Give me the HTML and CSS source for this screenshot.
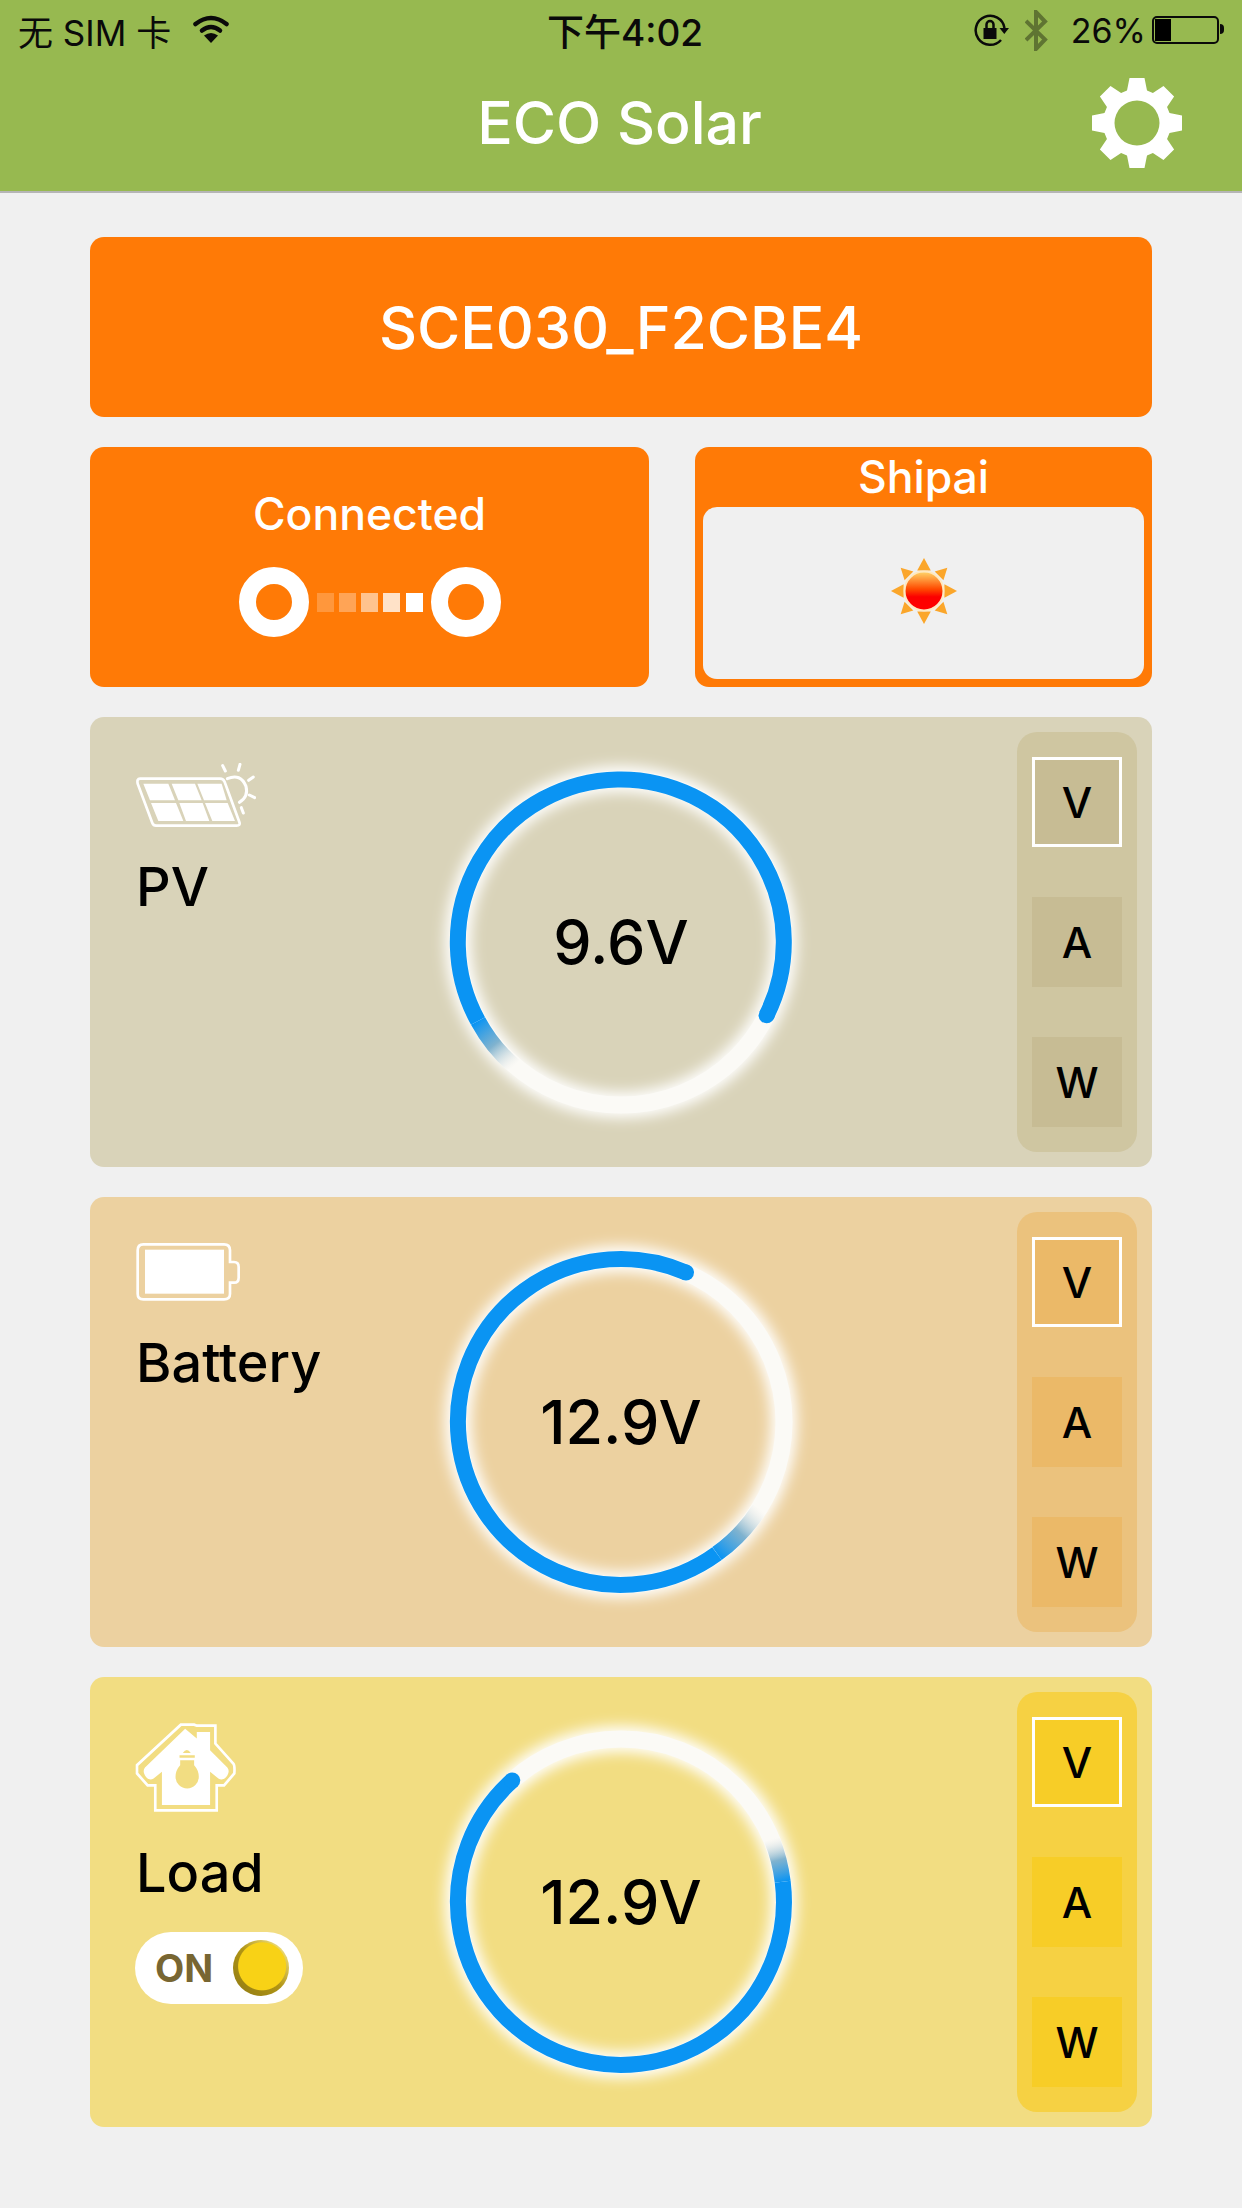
FILE: index.html
```html
<!DOCTYPE html>
<html>
<head>
  <meta charset="utf-8">
  <title>ECO Solar</title>
  <link rel="stylesheet" href="styles.css">
</head>
<body>
  <svg class="defs" width="0" height="0">
    <defs>
      <filter id="glow" x="-20%" y="-20%" width="140%" height="140%">
        <feGaussianBlur stdDeviation="7"></feGaussianBlur>
      </filter>
      <linearGradient id="fadePv" gradientUnits="userSpaceOnUse" x1="30" y1="252" x2="66" y2="297">
        <stop offset="0" stop-color="#0a94f3"></stop>
        <stop offset="0.5" stop-color="#6aa6c8" stop-opacity="0.85"></stop>
        <stop offset="1" stop-color="#d8dcd8" stop-opacity="0"></stop>
      </linearGradient>
      <linearGradient id="fadeBattery" gradientUnits="userSpaceOnUse" x1="269" y1="304.6" x2="311.5" y2="259.7">
        <stop offset="0" stop-color="#0a94f3"></stop>
        <stop offset="0.5" stop-color="#6aa6c8" stop-opacity="0.85"></stop>
        <stop offset="1" stop-color="#d8dcd8" stop-opacity="0"></stop>
      </linearGradient>
      <linearGradient id="fadeLoad" gradientUnits="userSpaceOnUse" x1="334.7" y1="152.8" x2="323.6" y2="110">
        <stop offset="0" stop-color="#0a94f3"></stop>
        <stop offset="0.5" stop-color="#6aa6c8" stop-opacity="0.85"></stop>
        <stop offset="1" stop-color="#d8dcd8" stop-opacity="0"></stop>
      </linearGradient>
      <linearGradient id="sunFill" x1="0" y1="0" x2="0" y2="1">
        <stop offset="0" stop-color="#ffd76a"></stop>
        <stop offset="0.45" stop-color="#ff4a00"></stop>
        <stop offset="0.65" stop-color="#fc0000"></stop>
        <stop offset="1" stop-color="#ff0000"></stop>
      </linearGradient>
    </defs>
  </svg>

  <div class="top">
    <div class="status-bar">
      <div class="status-left">
        <span>无 SIM 卡</span>
        <svg class="wifi" viewBox="0 0 36 28">
          <path class="wifi-band" d="M2.500 9 Q18 -3 33.500 9"></path>
          <path class="wifi-band" d="M9 15.500 Q18 8.500 27 15.500"></path>
          <path class="wifi-tip" d="M11 20.500 Q18 15.500 25 20.500 L18 28 Z"></path>
        </svg>
      </div>
      <div class="status-time">下午4:02</div>
      <div class="status-right">
        <svg class="lock" viewBox="0 0 36 34">
          <path class="lock-ring" d="M28 27 A14.500 14.500 0 1 1 31.500 15"></path>
          <path class="lock-solid" d="M26.500 15 H36 L31.300 21 Z"></path>
          <rect class="lock-solid" x="10.500" y="15" width="13" height="11"></rect>
          <path class="lock-ring" d="M13.500 15 V11.500 A3.500 3.500 0 0 1 20.500 11.500 V15"></path>
        </svg>
        <svg class="bluetooth" viewBox="0 0 23 41">
          <path d="M1 11 L20 29.500 L11 39 V2 L20 11.500 L1 30"></path>
        </svg>
        <span class="phone-percent">26%</span>
        <div class="phone-battery"><div class="phone-battery-level"></div></div>
      </div>
    </div>
    <div class="nav">
      <div class="nav-title">ECO Solar</div>
      <svg class="gear" viewBox="0 0 90 90">
        <path fill-rule="evenodd" d="M37.500 0 H52.500 L55 12.500 L60.900 14.950 L71.500 7.900 L82.100 18.500 L75.050 29.100 L77.500 35 L90 37.500 V52.500 L77.500 55 L75.050 60.900 L82.100 71.500 L71.500 82.100 L60.900 75.050 L55 77.500 L52.500 90 H37.500 L35 77.500 L29.100 75.050 L18.500 82.100 L7.900 71.500 L14.950 60.900 L12.500 55 L0 52.500 V37.500 L12.500 35 L14.950 29.100 L7.900 18.500 L18.500 7.900 L29.100 14.950 L35 12.500 Z M45 22.500 A22.500 22.500 0 1 0 45 67.500 A22.500 22.500 0 1 0 45 22.500 Z"></path>
      </svg>
    </div>
  </div>

  <div class="content">
    <div class="device-name">SCE030_F2CBE4</div>

    <div class="info-row">
      <div class="connection">
        <div class="connection-label">Connected</div>
        <div class="link">
          <div class="link-end"></div>
          <div class="link-dots">
            <i class="dot-1"></i><i class="dot-2"></i><i class="dot-3"></i><i class="dot-4"></i><i class="dot-5"></i>
          </div>
          <div class="link-end"></div>
        </div>
      </div>
      <div class="weather">
        <div class="weather-city">Shipai</div>
        <div class="weather-box">
          <svg class="sun" viewBox="0 0 70 70">
            <g class="sun-rays">
              <path d="M35 1 L42 14 H28 Z"></path>
              <path d="M35 69 L42 56 H28 Z"></path>
              <path d="M1 35 L14 28 V42 Z"></path>
              <path d="M69 35 L56 28 V42 Z"></path>
              <path d="M11 11 L24 15 L15 24 Z"></path>
              <path d="M59 11 L46 15 L55 24 Z"></path>
              <path d="M11 59 L24 55 L15 46 Z"></path>
              <path d="M59 59 L46 55 L55 46 Z"></path>
            </g>
            <circle class="sun-core" cx="35" cy="35" r="20"></circle>
          </svg>
        </div>
      </div>
    </div>

    <div class="card card-pv">
      <div class="card-info">
        <svg class="icon icon-pv" viewBox="48 38 360 195">
          <path class="icon-line" d="M60 85 H300 Q310 85 314 95 L358 215 Q362 226 350 226 H108 Q100 226 97 218 L53 100 Q50 85 60 85 Z"></path>
          <path class="icon-fill" d="M70 100 H145 L165 150 H90 Z M155 100 H225 L245 150 H175 Z M232 100 H305 L320 150 H252 Z M93 158 H168 L190 212 H115 Z M178 158 H248 L268 212 H198 Z M255 158 H323 L345 212 H277 Z"></path>
          <path class="icon-ray" d="M322 85 Q362 68 378 108 Q386 140 358 156"></path>
          <path class="icon-ray" d="M308 46 L316 62 M360 42 L355 60 M400 80 L386 90 M404 142 L388 134 M364 172 L370 188"></path>
        </svg>
        <div class="card-label">PV</div>
      </div>
      <div class="gauge">
        <svg viewBox="0 0 346 346">
          <circle class="gauge-glow" cx="173" cy="173" r="163"></circle>
          <circle class="gauge-track" cx="173" cy="173" r="163"></circle>
          <path class="gauge-arc" d="M30 252 A163 163 0 1 1 318.600 246.300"></path>
          <circle class="gauge-cap" cx="318.600" cy="246.300" r="8"></circle>
          <path class="gauge-fade" stroke="url(#fadePv)" d="M66 297 A163 163 0 0 1 30 252"></path>
        </svg>
        <div class="gauge-value">9.6V</div>
      </div>
      <div class="units">
        <div class="unit unit-active">V</div>
        <div class="unit">A</div>
        <div class="unit">W</div>
      </div>
    </div>

    <div class="card card-battery">
      <div class="card-info">
        <svg class="icon icon-battery" viewBox="48 68 312 174">
          <path class="icon-line" d="M70 72 H312 Q330 72 330 90 V125 H342 Q356 125 356 140 V172 Q356 187 342 187 H330 V220 Q330 237 312 237 H70 Q53 237 53 220 V90 Q53 72 70 72 Z"></path>
          <rect class="icon-fill" x="75" y="88" width="237" height="132"></rect>
        </svg>
        <div class="card-label">Battery</div>
      </div>
      <div class="gauge">
        <svg viewBox="0 0 346 346">
          <circle class="gauge-glow" cx="173" cy="173" r="163"></circle>
          <circle class="gauge-track" cx="173" cy="173" r="163"></circle>
          <path class="gauge-arc" d="M269 304.600 A163 163 0 1 1 238 23.500"></path>
          <circle class="gauge-cap" cx="238" cy="23.500" r="8"></circle>
          <path class="gauge-fade" stroke="url(#fadeBattery)" d="M311.500 259.700 A163 163 0 0 1 269 304.600"></path>
        </svg>
        <div class="gauge-value">12.9V</div>
      </div>
      <div class="units">
        <div class="unit unit-active">V</div>
        <div class="unit">A</div>
        <div class="unit">W</div>
      </div>
    </div>

    <div class="card card-load">
      <div class="card-info">
        <svg class="icon icon-load" viewBox="45 38 302 268">
          <path class="icon-line" d="M182 43 H222 L230 46 H286 V100 L340 160 Q345 166 343 190 L312 226 H290 V301 H105 V226 H82 L50 190 V165 Z"></path>
          <path class="icon-fill" fill-rule="evenodd" d="M195 55 L230 85 V65 H270 V120 L322 172 Q330 182 322 196 Q310 214 295 205 L270 185 V285 H125 V185 L100 205 Q85 214 74 196 Q66 182 74 172 Z M188 128 Q200 110 212 128 Z M178 135 H224 V143 H178 Z M180 150 H222 V165 Q236 180 236 200 A35 35 0 0 1 166 200 Q166 180 180 165 Z"></path>
        </svg>
        <div class="card-label">Load</div>
        <div class="toggle">
          <span class="toggle-text">ON</span>
          <div class="toggle-knob"></div>
        </div>
      </div>
      <div class="gauge">
        <svg viewBox="0 0 346 346">
          <circle class="gauge-glow" cx="173" cy="173" r="163"></circle>
          <circle class="gauge-track" cx="173" cy="173" r="163"></circle>
          <path class="gauge-arc" d="M334.700 152.800 A163 163 0 1 1 64.200 51.500"></path>
          <circle class="gauge-cap" cx="64.200" cy="51.500" r="8"></circle>
          <path class="gauge-fade" stroke="url(#fadeLoad)" d="M323.600 110 A163 163 0 0 1 334.700 152.800"></path>
        </svg>
        <div class="gauge-value">12.9V</div>
      </div>
      <div class="units">
        <div class="unit unit-active">V</div>
        <div class="unit">A</div>
        <div class="unit">W</div>
      </div>
    </div>
  </div>
</body>
</html>
```

FILE: styles.css
```css
html, body {
  margin: 0;
  padding: 0;
}

body {
  width: 1242px;
  height: 2208px;
  background: #f0f0f0;
  font-family: Inter, "Noto Sans CJK SC", sans-serif;
  color: #000;
  overflow: hidden;
}

.defs {
  position: absolute;
}

.top {
  height: 191px;
  background: #97b950;
  border-bottom: 2px solid #b5b5b5;
}

.status-bar {
  height: 60px;
  padding: 0 18px;
  display: grid;
  grid-template-columns: 1fr auto 1fr;
  align-items: center;
  font-size: 35px;
  color: #0a0a0a;
}

.status-left {
  display: flex;
  align-items: center;
  gap: 22px;
}

.wifi {
  width: 36px;
  height: 28px;
  margin-top: -2px;
}

.wifi-band {
  fill: none;
  stroke: #0a0a0a;
  stroke-width: 4.500;
  stroke-linecap: round;
}

.wifi-tip {
  fill: #0a0a0a;
}

.status-time {
  font-weight: 500;
  font-size: 37px;
  margin-left: 8px;
}

.status-right {
  display: flex;
  align-items: center;
  justify-content: flex-end;
}

.lock {
  width: 36px;
  height: 34px;
}

.lock-ring {
  fill: none;
  stroke: #0a0a0a;
  stroke-width: 2.500;
}

.lock-solid {
  fill: #0a0a0a;
}

.bluetooth {
  width: 23px;
  height: 41px;
  margin-left: 16px;
  margin-right: 23px;
}

.bluetooth path {
  fill: none;
  stroke: #5f7432;
  stroke-width: 4;
}

.phone-percent {
  font-size: 34px;
  margin-right: 6px;
}

.phone-battery {
  width: 67px;
  height: 28px;
  margin-right: 5px;
  border: 2px solid #0a0a0a;
  border-radius: 5px;
  box-sizing: border-box;
  padding: 1px;
  position: relative;
}

.phone-battery::after {
  content: "";
  position: absolute;
  right: -7px;
  top: 6px;
  width: 4px;
  height: 10px;
  background: #0a0a0a;
  border-radius: 0 4px 4px 0;
}

.phone-battery-level {
  width: 16px;
  height: 100%;
  background: #000;
}

.nav {
  height: 131px;
  position: relative;
  display: flex;
  align-items: center;
  justify-content: center;
}

.nav-title {
  color: #fff;
  font-size: 59px;
  font-weight: 500;
  margin-left: -3px;
  margin-top: -6px;
}

.gear {
  position: absolute;
  right: 60px;
  top: 18px;
  width: 90px;
  height: 90px;
}

.gear path {
  fill: #fff;
}

.content {
  padding: 44px 90px 0;
  display: flex;
  flex-direction: column;
  gap: 30px;
}

.device-name {
  height: 180px;
  background: #ff7a06;
  border-radius: 14px;
  color: #fff;
  font-size: 59px;
  font-weight: 500;
  display: flex;
  align-items: center;
  justify-content: center;
}

.info-row {
  height: 240px;
  display: flex;
  gap: 46px;
}

.connection {
  width: 559px;
  background: #ff7a06;
  border-radius: 14px;
  color: #fff;
  display: flex;
  flex-direction: column;
  align-items: center;
  padding-top: 41px;
  box-sizing: border-box;
}

.connection-label {
  font-size: 44.500px;
  font-weight: 500;
  line-height: 52px;
  margin-bottom: 27px;
}

.link {
  display: flex;
  align-items: center;
  gap: 8px;
}

.link-end {
  width: 70px;
  height: 70px;
  box-sizing: border-box;
  border: 17px solid #fff;
  border-radius: 50%;
}

.link-dots {
  width: 106px;
  display: flex;
  justify-content: space-between;
}

.link-dots i {
  display: block;
  width: 17px;
  height: 19px;
  background: #fff;
}

.dot-1 { opacity: 0.22; }
.dot-2 { opacity: 0.32; }
.dot-3 { opacity: 0.55; }
.dot-4 { opacity: 0.78; }
.dot-5 { opacity: 1; }

.weather {
  flex: 1;
  background: #ff7a06;
  border-radius: 14px;
  padding: 0 8px 8px;
  display: flex;
  flex-direction: column;
}

.weather-city {
  height: 60px;
  color: #fff;
  font-size: 44.500px;
  font-weight: 500;
  line-height: 60px;
  text-align: center;
}

.weather-box {
  flex: 1;
  background: #f0f0f0;
  border-radius: 14px;
  display: flex;
  align-items: center;
  justify-content: center;
}

.sun {
  width: 68px;
  height: 68px;
  margin-top: -4px;
  filter: blur(0.6px);
}

.sun-rays path {
  fill: #fba62a;
}

.sun-core {
  fill: url(#sunFill);
  stroke: #ffe9c0;
  stroke-width: 2;
}

.card {
  height: 450px;
  border-radius: 14px;
  padding: 15px;
  box-sizing: border-box;
  display: grid;
  grid-template-columns: 1fr auto 1fr;
  align-items: center;
}

.card-pv { background: #d9d3b9; }
.card-battery { background: #ecd1a0; }
.card-load { background: #f2dd82; }

.card-info {
  align-self: stretch;
  padding: 31px 0 0 31px;
  display: flex;
  flex-direction: column;
  align-items: flex-start;
}

.icon {
  display: block;
}

.icon-line {
  fill: none;
  stroke: #fff;
  stroke-width: 8;
}

.icon-fill {
  fill: #fff;
}

.icon-ray {
  fill: none;
  stroke: #fff;
  stroke-width: 9;
  stroke-linecap: round;
}

.icon-pv {
  width: 120px;
  height: 65px;
}

.icon-battery {
  width: 104px;
  height: 58px;
}

.icon-load {
  width: 101px;
  height: 89px;
  margin-left: -1px;
}

.card-label {
  font-size: 54px;
  font-weight: 500;
  line-height: 60px;
  margin-top: 29px;
}

.card-battery .card-label {
  margin-top: 32px;
}

.card-load .card-label {
  margin-top: 31px;
}

.toggle {
  width: 168px;
  height: 72px;
  margin-top: 29px;
  margin-left: -1px;
  background: #fff;
  border-radius: 36px;
  display: flex;
  align-items: center;
  justify-content: space-between;
  padding: 0 14px 0 20px;
  box-sizing: border-box;
}

.toggle-text {
  color: #786632;
  font-size: 38px;
  font-weight: 700;
}

.toggle-knob {
  width: 56px;
  height: 56px;
  border-radius: 50%;
  background: radial-gradient(circle at 52% 47%, #f8d216 23.500px, transparent 24.500px), linear-gradient(45deg, #8f7a14, #b09414 50%, #f2e07a 90%);
}

.gauge {
  width: 346px;
  height: 346px;
  position: relative;
  display: flex;
  align-items: center;
  justify-content: center;
}

.gauge svg {
  position: absolute;
  left: 0;
  top: 0;
  width: 346px;
  height: 346px;
  overflow: visible;
}

.gauge-glow {
  fill: none;
  stroke: #fff;
  stroke-width: 26;
  filter: url(#glow);
}

.gauge-track {
  fill: none;
  stroke: #fbfaf6;
  stroke-width: 17;
}

.gauge-arc {
  fill: none;
  stroke: #0a94f3;
  stroke-width: 16;
}

.gauge-cap {
  fill: #0a94f3;
}

.gauge-fade {
  fill: none;
  stroke-width: 16;
}

.gauge-value {
  font-size: 61px;
  font-weight: 500;
  position: relative;
}

.units {
  justify-self: end;
  width: 120px;
  height: 420px;
  box-sizing: border-box;
  padding: 25px 15px;
  border-radius: 20px;
  display: flex;
  flex-direction: column;
  justify-content: space-between;
}

.card-pv .units { background: #cfc6a1; }
.card-battery .units { background: #ebc27d; }
.card-load .units { background: #f6d143; }

.unit {
  height: 90px;
  box-sizing: border-box;
  display: flex;
  align-items: center;
  justify-content: center;
  font-size: 43px;
  font-weight: 500;
}

.card-pv .unit { background: #c7bc94; }
.card-battery .unit { background: #ebb968; }
.card-load .unit { background: #f7cd27; }

.unit-active {
  border: 3px solid #fff;
}
```
